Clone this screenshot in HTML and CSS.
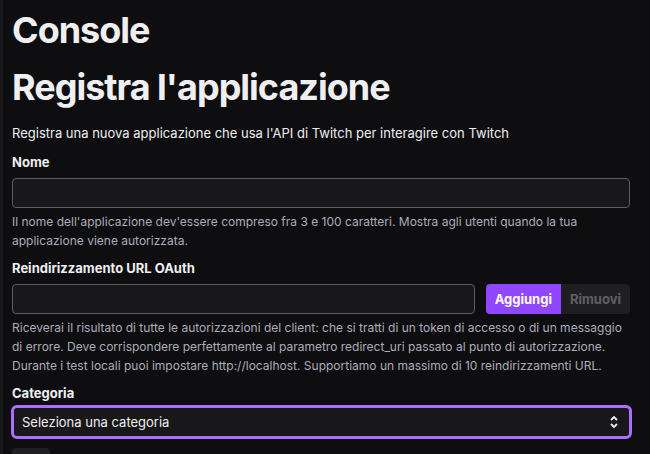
FILE: index.html
```html
<!DOCTYPE html>
<html lang="it">
<head>
<meta charset="utf-8">
<title>Console</title>
<link rel="stylesheet" href="styles.css">
</head>
<body>
<div class="page">
  <h1 class="title">Console</h1>
  <h2 class="title sub-title">Registra l'applicazione</h2>
  <p class="intro">Registra una nuova applicazione che usa l'API di Twitch per interagire con Twitch</p>

  <div class="field">
    <label class="label">Nome</label>
    <input class="input" type="text">
    <p class="help">Il nome dell'applicazione dev'essere compreso fra 3 e 100 caratteri. Mostra agli utenti quando la tua applicazione viene autorizzata.</p>
  </div>

  <div class="field">
    <label class="label">Reindirizzamento URL OAuth</label>
    <div class="row">
      <input class="input grow" type="text">
      <div class="btns">
        <button class="btn primary">Aggiungi</button>
        <button class="btn disabled">Rimuovi</button>
      </div>
    </div>
    <p class="help">Riceverai il risultato di tutte le autorizzazioni del client: che si tratti di un token di accesso o di un messaggio di errore. Deve corrispondere perfettamente al parametro redirect_uri passato al punto di autorizzazione. Durante i test locali puoi impostare http://localhost. Supportiamo un massimo di 10 reindirizzamenti URL.</p>
  </div>

  <div class="field">
    <label class="label">Categoria</label>
    <div class="select">
      <span>Seleziona una categoria</span>
      <svg class="chev" width="10" height="14" viewBox="0 0 10 14"><path d="M2 5 L5 2 L8 5 M2 9 L5 12 L8 9" fill="none" stroke="#efeff1" stroke-width="1.8"/></svg>
    </div>
  </div>
  <div class="stub"></div>
</div>
</body>
</html>
```

FILE: styles.css
```css
* { box-sizing: border-box; }
html, body { margin: 0; padding: 0; }
body {
  background: #0e0e10;
  color: #efeff1;
  font-family: Inter, "Noto Sans", sans-serif;
  font-size: 13px;
  overflow: hidden;
  height: 454px;
}
.page {
  border-left: 3px solid #18181b;
  padding: 0 20px 0 9px;
  height: 454px;
}
.title {
  margin: 0;
  font-size: 36px;
  font-weight: 700;
  line-height: 60px;
  letter-spacing: -1px;
}
.sub-title { margin-top: -3px; }
.intro {
  margin: 6px 0 0;
  line-height: 20px;
}
.field { margin-top: 8px; }
.field:first-of-type { margin-top: 9px; }
.label {
  display: block;
  font-weight: 700;
  line-height: 20px;
  margin-bottom: 6px;
}
.input {
  display: block;
  width: 100%;
  height: 30px;
  background: #18181b;
  border: 1px solid #5c5c63;
  border-radius: 4px;
  color: #efeff1;
  font: inherit;
  padding: 0 10px;
  outline: none;
}
.row {
  display: flex;
  align-items: center;
  gap: 11px;
}
.grow { flex: 1; width: auto; }
.btns { display: flex; }
.btn {
  height: 30px;
  border: none;
  font-family: inherit;
  font-size: 13px;
  font-weight: 700;
  padding: 0 9px;
}
.primary {
  background: #9147ff;
  color: #ffffff;
  border-radius: 4px 0 0 4px;
}
.disabled {
  background: #1f1f23;
  color: #5f5f65;
  border-radius: 0 4px 4px 0;
}
.help {
  margin: 4px 0 0;
  color: #adadb8;
  font-size: 12px;
  line-height: 19px;
}
.select {
  margin: -4px -2px 0 -1px;
  height: 34px;
  border: 3px solid #a970ff;
  border-radius: 6px;
  background: #18181b;
  display: flex;
  align-items: center;
  justify-content: space-between;
  padding: 0 10px 0 8px;
  color: #efeff1;
}
.chev { display: block; }
.stub {
  margin-top: 9px;
  width: 38px;
  height: 30px;
  background: #1f1f23;
  border-radius: 4px;
}
```
